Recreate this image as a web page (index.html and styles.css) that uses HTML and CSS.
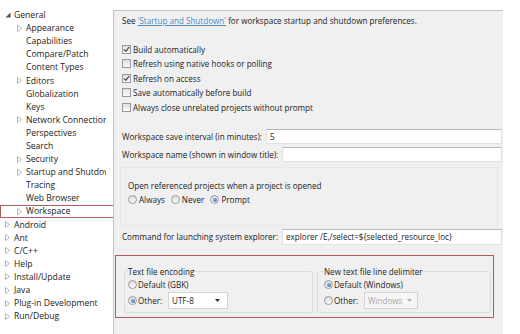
FILE: index.html
```html
<!DOCTYPE html>
<html lang="en">
<head>
    <meta charset="UTF-8">
    <meta name="viewport" content="width=device-width, initial-scale=1.0">
    <title>Preferences - Workspace</title>
    <link rel="stylesheet" href="styles.css">
</head>
<body>
    <svg class="defs" width="0" height="0">
        <symbol id="tw-closed" viewBox="0 0 5 7"><path d="M0.5 0.5 L4.5 3.5 L0.5 6.5 Z" fill="none" stroke="#b4b4b4"/></symbol>
        <symbol id="tw-open" viewBox="0 0 6 6"><path d="M5.5 0.5 V5.5 H0.5 Z" fill="#505050"/></symbol>
        <symbol id="tick" viewBox="0 0 7 7"><path d="M1 3.4 L2.9 5.4 L6.2 1" fill="none" stroke="#444" stroke-width="1.2"/></symbol>
        <symbol id="drop" viewBox="0 0 5 3"><path d="M0 0 H5 L2.5 3 Z"/></symbol>
    </svg>

    <div class="window">
        <nav class="tree">
            <div class="node lvl0"><span class="twisty"><svg width="6" height="6"><use href="#tw-open"/></svg></span><span class="label">General</span></div>
            <div class="node lvl1"><span class="twisty"><svg width="5" height="7"><use href="#tw-closed"/></svg></span><span class="label">Appearance</span></div>
            <div class="node lvl1"><span class="twisty"></span><span class="label">Capabilities</span></div>
            <div class="node lvl1"><span class="twisty"></span><span class="label">Compare/Patch</span></div>
            <div class="node lvl1"><span class="twisty"></span><span class="label">Content Types</span></div>
            <div class="node lvl1"><span class="twisty"><svg width="5" height="7"><use href="#tw-closed"/></svg></span><span class="label">Editors</span></div>
            <div class="node lvl1"><span class="twisty"></span><span class="label">Globalization</span></div>
            <div class="node lvl1"><span class="twisty"></span><span class="label">Keys</span></div>
            <div class="node lvl1"><span class="twisty"><svg width="5" height="7"><use href="#tw-closed"/></svg></span><span class="label">Network Connections</span></div>
            <div class="node lvl1"><span class="twisty"></span><span class="label">Perspectives</span></div>
            <div class="node lvl1"><span class="twisty"></span><span class="label">Search</span></div>
            <div class="node lvl1"><span class="twisty"><svg width="5" height="7"><use href="#tw-closed"/></svg></span><span class="label">Security</span></div>
            <div class="node lvl1"><span class="twisty"><svg width="5" height="7"><use href="#tw-closed"/></svg></span><span class="label">Startup and Shutdown</span></div>
            <div class="node lvl1"><span class="twisty"></span><span class="label">Tracing</span></div>
            <div class="node lvl1"><span class="twisty"></span><span class="label">Web Browser</span></div>
            <div class="node lvl1 marked"><span class="twisty"><svg width="5" height="7"><use href="#tw-closed"/></svg></span><span class="label">Workspace</span></div>
            <div class="node lvl0"><span class="twisty"><svg width="5" height="7"><use href="#tw-closed"/></svg></span><span class="label">Android</span></div>
            <div class="node lvl0"><span class="twisty"><svg width="5" height="7"><use href="#tw-closed"/></svg></span><span class="label">Ant</span></div>
            <div class="node lvl0"><span class="twisty"><svg width="5" height="7"><use href="#tw-closed"/></svg></span><span class="label">C/C++</span></div>
            <div class="node lvl0"><span class="twisty"><svg width="5" height="7"><use href="#tw-closed"/></svg></span><span class="label">Help</span></div>
            <div class="node lvl0"><span class="twisty"><svg width="5" height="7"><use href="#tw-closed"/></svg></span><span class="label">Install/Update</span></div>
            <div class="node lvl0"><span class="twisty"><svg width="5" height="7"><use href="#tw-closed"/></svg></span><span class="label">Java</span></div>
            <div class="node lvl0"><span class="twisty"><svg width="5" height="7"><use href="#tw-closed"/></svg></span><span class="label">Plug-in Development</span></div>
            <div class="node lvl0"><span class="twisty"><svg width="5" height="7"><use href="#tw-closed"/></svg></span><span class="label">Run/Debug</span></div>
        </nav>

        <main class="page">
            <p class="intro">See <a href="#" class="link">'Startup and Shutdown'</a> for workspace startup and shutdown preferences.</p>

            <div class="checks">
                <div class="check"><span class="box"><svg width="7" height="7"><use href="#tick"/></svg></span>Build automatically</div>
                <div class="check"><span class="box"></span>Refresh using native hooks or polling</div>
                <div class="check"><span class="box"><svg width="7" height="7"><use href="#tick"/></svg></span>Refresh on access</div>
                <div class="check"><span class="box"></span>Save automatically before build</div>
                <div class="check"><span class="box"></span>Always close unrelated projects without prompt</div>
            </div>

            <div class="field first">
                <label class="field-label">Workspace save interval (in minutes):</label>
                <input class="text" type="text" value="5" readonly>
            </div>
            <div class="field">
                <label class="field-label">Workspace name (shown in window title):</label>
                <input class="text" type="text" value="" readonly>
            </div>

            <div class="group">
                <div class="group-title">Open referenced projects when a project is opened</div>
                <div class="radios">
                    <span class="opt"><span class="radio"></span>Always</span>
                    <span class="opt"><span class="radio"></span>Never</span>
                    <span class="opt"><span class="radio on"></span>Prompt</span>
                </div>
            </div>

            <div class="field cmd">
                <label class="field-label">Command for launching system explorer:</label>
                <input class="text" type="text" value="explorer /E,/select=${selected_resource_loc}" readonly>
            </div>

            <div class="marked-area">
                <fieldset class="enc">
                    <legend>Text file encoding</legend>
                    <div class="opt-row"><span class="radio"></span>Default (GBK)</div>
                    <div class="opt-row tall"><span class="radio on"></span><span class="other">Other:</span>
                        <span class="combo">UTF-8<svg width="5" height="3"><use href="#drop"/></svg></span>
                    </div>
                </fieldset>
                <fieldset class="delim">
                    <legend>New text file line delimiter</legend>
                    <div class="opt-row"><span class="radio on"></span>Default (Windows)</div>
                    <div class="opt-row tall"><span class="radio"></span><span class="other">Other:</span>
                        <span class="combo off">Windows<svg width="5" height="3"><use href="#drop"/></svg></span>
                    </div>
                </fieldset>
            </div>
        </main>
    </div>
</body>
</html>
```

FILE: styles.css
```css
body{
    margin: 0;
    background-color: white;
    font-family: "Open Sans", "Noto Sans", sans-serif;
    font-size: 8.1px;
    color: #222;
}

.defs{
    position: absolute;
}

.window{
    display: flex;
    width: 520px;
    height: 334px;
    overflow: hidden;
}

/* left tree */
.tree{
    flex: 0 0 113px;
    width: 113px;
    padding-top: 8.5px;
    box-sizing: border-box;
    font-size: 8.6px;
}

.node{
    display: flex;
    align-items: center;
    height: 13.1px;
    padding-right: 7px;
    box-sizing: border-box;
    white-space: nowrap;
}

.lvl0{ padding-left: 3px; }
.lvl1{ padding-left: 15px; }

.twisty{
    flex: 0 0 11px;
    display: flex;
    align-items: center;
    padding-left: 2px;
    box-sizing: border-box;
}

.label{
    flex: 1;
    overflow: hidden;
    min-width: 0;
}

.marked{
    border: 1px solid #b05a62;
    margin-right: -2px;
    padding-left: 14px;
    padding-right: 9px;
}

/* right page */
.page{
    flex: 0 0 390px;
    margin-top: 10px;
    background-color: #f0f0f0;
    border-top: 1px solid #c4c4c4;
    border-left: 1px solid #c4c4c4;
    box-sizing: border-box;
}

.intro{
    margin: 0;
    padding: 3px 0 0 8px;
    line-height: 13px;
    white-space: nowrap;
}

.link{
    color: #4a8cc6;
    text-decoration: underline;
}

.checks{
    margin-top: 15.3px;
    padding-left: 8px;
}

.check{
    display: flex;
    align-items: center;
    gap: 2px;
    height: 14.4px;
}

.box{
    width: 9px;
    height: 9px;
    border: 1px solid #999;
    background: linear-gradient(#dedede, #fbfbfb);
    box-sizing: border-box;
    display: flex;
    align-items: center;
    justify-content: center;
}

.field{
    display: flex;
    align-items: center;
    height: 15px;
    padding-left: 8px;
    margin-top: 3px;
    margin-right: 1px;
    gap: 4px;
}

.field.first{
    margin-top: 15.2px;
}

.field-label{
    white-space: nowrap;
}

.text{
    flex: 1;
    min-width: 0;
    height: 15px;
    box-sizing: border-box;
    border: 1px solid #e2e2e2;
    border-top-color: #b8b8b8;
    background: white;
    font: inherit;
    color: #222;
    padding: 0 3px;
    outline: none;
}

.group{
    margin: 5px 5px 0 6px;
    padding: 11px 0 18.5px 7px;
    border: 1px solid #e8e8e8;
}

.group-title{
    line-height: 13px;
}

.radios{
    display: flex;
    align-items: center;
    height: 13px;
    margin-top: 1px;
}

.opt{
    display: flex;
    align-items: center;
    gap: 1px;
    margin-right: 6px;
}

.radio{
    width: 9px;
    height: 9px;
    border-radius: 50%;
    border: 1px solid #999;
    background: linear-gradient(#dcdcdc, #fbfbfb);
    box-sizing: border-box;
    display: inline-flex;
    align-items: center;
    justify-content: center;
    margin-right: 1px;
}

.radio.on::after{
    content: "";
    width: 4px;
    height: 4px;
    border-radius: 50%;
    background: radial-gradient(circle at 40% 35%, #7fb5e8, #1f5ea8);
}

.field.cmd{
    height: 16px;
    margin-top: 3px;
}

.cmd .text{
    height: 16px;
}

.marked-area{
    display: flex;
    gap: 4px;
    margin: 10px 0 0 1px;
    width: 379px;
    padding: 9.5px 2px 4px 8px;
    border: 1px solid #b05a62;
    box-sizing: border-box;
}

fieldset{
    margin: 0;
    padding: 0 0 3px 3px;
    border: 1px solid #dcdcdc;
    border-radius: 3px;
    min-width: 0;
}

legend{
    padding: 0;
    line-height: 13px;
}

.enc{
    flex: 0 0 189px;
    box-sizing: border-box;
}

.delim{
    flex: 1;
    padding-left: 6px;
}

.opt-row{
    display: flex;
    align-items: center;
    height: 13px;
    white-space: nowrap;
}

.opt-row.tall{
    height: 17px;
    margin-top: 1px;
}

.other{
    width: 30px;
}

.combo{
    display: flex;
    align-items: center;
    justify-content: space-between;
    width: 60px;
    height: 17px;
    padding: 0 7px 0 3px;
    box-sizing: border-box;
    background: white;
    border: 1px solid #d4d4d4;
    color: #222;
    fill: #303030;
}

.combo.off{
    width: 54px;
    background: #f6f6f6;
    color: #a8a8a8;
    fill: #b0b0b0;
    padding-right: 5px;
}
```
